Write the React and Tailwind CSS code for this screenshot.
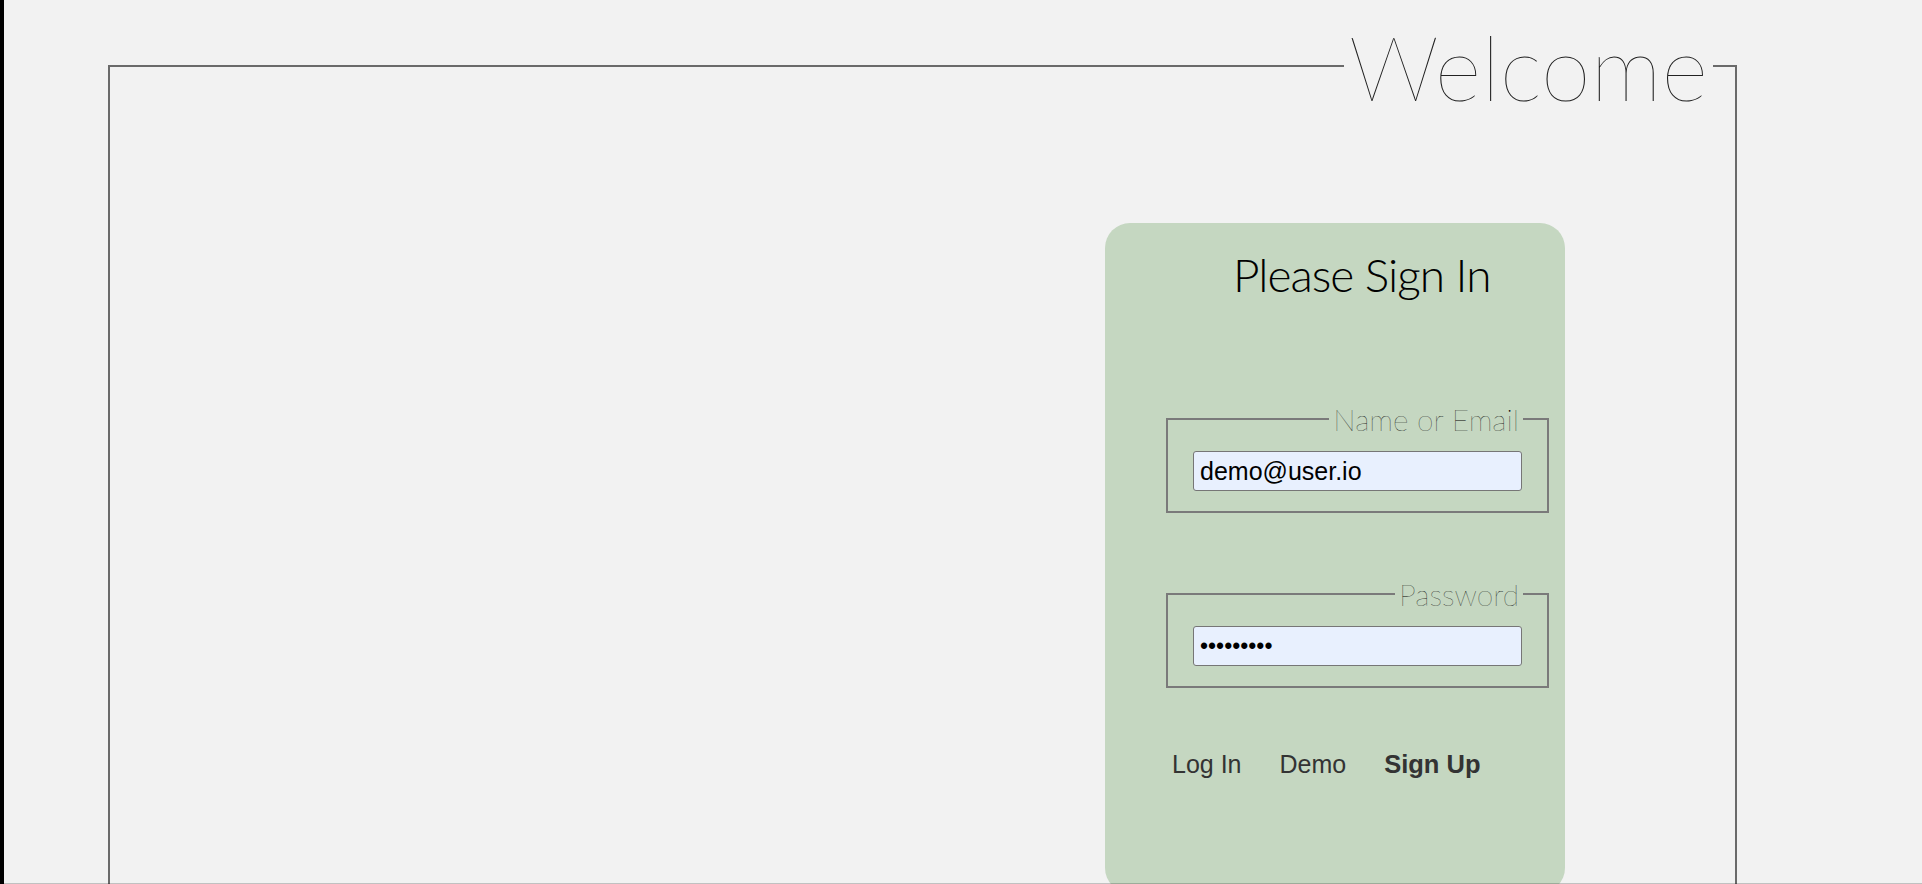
export default function App() {
  return (
    <div className="min-h-screen bg-[#f2f2f2] border-l-4 border-black pl-[104px] pt-[12px] font-['Lato',sans-serif]">
      <fieldset className="w-[1629px] border-2 border-[#6a6a6a] m-0 p-0">
        <legend className="ml-auto mr-[22px] px-[5px] font-['Lato',sans-serif] font-thin text-[90px] leading-[1.2] text-[#222]">
          Welcome
        </legend>
        <div className="flex justify-end pr-[170px] pt-[103px]">
          <div className="w-[460px] h-[670px] rounded-[25px] bg-[#c5d7c1] flex flex-col">
            <h2 className="mt-[24px] pl-[128px] font-['Lato',sans-serif] font-light text-[46px] tracking-[-1px] leading-[1.2] text-black">
              Please Sign In
            </h2>
            <fieldset className="mt-[99px] ml-[61px] w-[383px] border-2 border-[#7a7a7a] pb-[20px]">
              <legend className="ml-auto mr-[24px] px-[4px] font-['Lato',sans-serif] font-thin text-[30px] leading-[1.2] text-black">
                Name or Email
              </legend>
              <input
                readOnly
                value="demo@user.io"
                className="block mt-[14px] ml-[25px] w-[329px] h-[40px] border border-[#767676] rounded-[3px] bg-[#e8f0fe] pl-[6px] font-['Liberation_Sans',Arial,sans-serif] text-[25px] text-black outline-none"
              />
            </fieldset>
            <fieldset className="mt-[63px] ml-[61px] w-[383px] border-2 border-[#7a7a7a] pb-[20px]">
              <legend className="ml-auto mr-[24px] px-[4px] font-['Lato',sans-serif] font-thin text-[30px] leading-[1.2] text-black">
                Password
              </legend>
              <input
                readOnly
                type="password"
                value="demo12345"
                className="block mt-[14px] ml-[25px] w-[329px] h-[40px] border border-[#767676] rounded-[3px] bg-[#e8f0fe] pl-[6px] font-['Liberation_Sans',Arial,sans-serif] text-[23px] text-black outline-none"
              />
            </fieldset>
            <div className="mt-[62px] pl-[67px] flex gap-[38px] font-['Liberation_Sans',Arial,sans-serif] text-[25px] leading-[29px] text-[#333]">
              <button className="p-0 bg-transparent">Log In</button>
              <button className="p-0 bg-transparent">Demo</button>
              <button className="p-0 bg-transparent font-bold text-[25.5px]">Sign Up</button>
            </div>
          </div>
        </div>
      </fieldset>
      <div className="fixed bottom-0 left-0 right-0 h-px bg-black/20" />
    </div>
  );
}
